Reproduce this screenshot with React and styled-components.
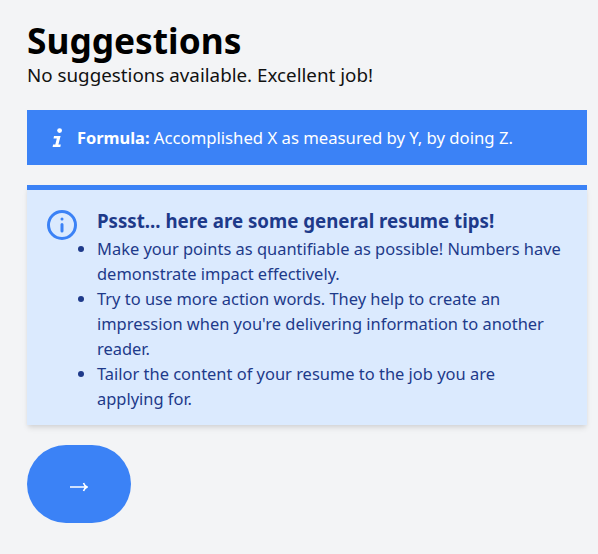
import React from 'react'
import styled, { createGlobalStyle } from 'styled-components'

const GlobalStyle = createGlobalStyle`
  html, body {
    margin: 0;
    background-color: #f3f4f6;
    font-family: "Noto Sans", "Open Sans", sans-serif;
  }
  * { box-sizing: border-box; }
`

const Page = styled.div`
  width: 598px;
  height: 554px;
  overflow: hidden;
  padding: 20px 11px 0 27px;
`

const Title = styled.h1`
  margin: 0;
  font-size: 35.3px;
  line-height: 40px;
  font-weight: 700;
  color: #000;
`

const Subtitle = styled.p`
  margin: 0 0 20px;
  font-size: 18.8px;
  line-height: 30px;
  color: #111;
`

const FormulaBar = styled.div`
  height: 55px;
  background-color: #3b82f6;
  color: #fff;
  display: flex;
  align-items: center;
  gap: 13px;
  padding-left: 25px;
  font-size: 16.7px;
  margin-bottom: 20px;

  b {
    font-size: 16.4px;
  }
`

const TipsCard = styled.div`
  background-color: #dbeafe;
  border-top: 5px solid #3b82f6;
  padding: 17px 24px 14px 19px;
  display: flex;
  align-items: flex-start;
  gap: 20px;
  box-shadow: 0 4px 6px -1px rgba(0, 0, 0, 0.1), 0 2px 4px -1px rgba(0, 0, 0, 0.06);
  margin-bottom: 20px;
`

const TipsIcon = styled.svg`
  flex: none;
  margin: 3px 0 0 1px;
`

const TipsBody = styled.div`
  flex: 1;
`

const TipsTitle = styled.div`
  font-weight: 700;
  font-size: 18.7px;
  line-height: 27px;
  margin-bottom: 2px;
  color: #1e3a8a;
`

const TipsList = styled.ul`
  margin: 0;
  padding: 0;
  list-style: disc;
  color: #1e3a8a;
  font-size: 16.45px;
  line-height: 25px;
`

const RoundButton = styled.button`
  display: flex;
  align-items: center;
  justify-content: center;
  width: 104px;
  height: 78px;
  padding: 6px 0 0;
  border: none;
  border-radius: 39px;
  background-color: #3b82f6;
`

export default function App() {
  return (
    <Page>
      <GlobalStyle />
      <Title>Suggestions</Title>
      <Subtitle>No suggestions available. Excellent job!</Subtitle>
      <FormulaBar>
        <svg width="12" height="20" viewBox="0 0 12 20" fill="#fff">
          <circle cx="7.6" cy="2.6" r="2.4" />
          <path d="M2 8h6.6l-2.2 8.6h2.4l-.5 2.4H.6l.5-2.4h2.2l1.5-6.2H1.5z" />
        </svg>
        <span><b>Formula:</b> Accomplished X as measured by Y, by doing Z.</span>
      </FormulaBar>
      <TipsCard>
        <TipsIcon width="30" height="30" viewBox="0 0 30 30" fill="none" stroke="#3b82f6" strokeWidth="3" strokeLinecap="round">
          <circle cx="15" cy="15" r="13.5" />
          <path d="M15 21v-6.5M15 9h.01" />
        </TipsIcon>
        <TipsBody>
          <TipsTitle>Pssst... here are some general resume tips!</TipsTitle>
          <TipsList>
            <li>Make your points as quantifiable as possible! Numbers have demonstrate impact effectively.</li>
            <li>Try to use more action words. They help to create an impression when you're delivering information to another reader.</li>
            <li>Tailor the content of your resume to the job you are<br />applying for.</li>
          </TipsList>
        </TipsBody>
      </TipsCard>
      <RoundButton aria-label="Next">
        <svg width="18" height="10" viewBox="0 0 18 10" fill="none" stroke="#fff" strokeWidth="1.6">
          <path d="M0 5h16.5M13.5 1c.6 1.8 1.8 3.2 3.5 4-1.7.8-2.9 2.2-3.5 4" />
        </svg>
      </RoundButton>
    </Page>
  )
}
